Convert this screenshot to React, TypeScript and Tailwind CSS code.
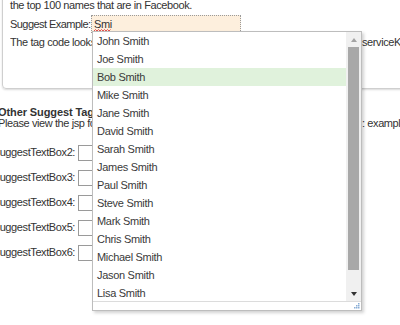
import React from 'react';

const names = [
  'John Smith',
  'Joe Smith',
  'Bob Smith',
  'Mike Smith',
  'Jane Smith',
  'David Smith',
  'Sarah Smith',
  'James Smith',
  'Paul Smith',
  'Steve Smith',
  'Mark Smith',
  'Chris Smith',
  'Michael Smith',
  'Jason Smith',
  'Lisa Smith',
];

const SuggestList = ({ active }: { active: number }) => (
  <div className="absolute left-[92px] top-[31px] flex h-[280px] w-[270px] flex-col border border-[#bdbdbd] bg-white tracking-[-0.3px] shadow-[2px_2px_3px_rgba(0,0,0,0.18)]">
    <div className="flex h-[269px]">
      <div className="flex-1 overflow-hidden">
        {names.map((n, i) => (
          <div
            key={n}
            className={`h-[18px] whitespace-nowrap pl-[4px] leading-[18px] text-[#3a3a3a] ${i === active ? 'bg-[#e0f2dc]' : ''}`}
          >
            {n}
          </div>
        ))}
      </div>
      {/* scrollbar */}
      <div className="flex w-[15px] flex-col bg-[#f0f0f0]">
        <div className="flex h-[15px] items-center justify-center">
          <div className="h-0 w-0 border-x-[3.5px] border-b-[4px] border-x-transparent border-b-[#a3a3a3]" />
        </div>
        <div className="ml-[2px] h-[223px] w-[11px] bg-[#a8a8a8]" />
        <div className="flex-1" />
        <div className="flex h-[15px] items-center justify-center">
          <div className="h-0 w-0 border-x-[3.5px] border-t-[4px] border-x-transparent border-t-[#333]" />
        </div>
      </div>
    </div>
    <div className="relative flex-1 border-t border-[#dcdcdc]">
      <svg className="absolute bottom-[1px] right-[1px]" width="6" height="6" viewBox="0 0 6 6">
        <rect x="4" y="0" width="1.5" height="1.5" fill="#8aaed6" />
        <rect x="2" y="2" width="1.5" height="1.5" fill="#8aaed6" />
        <rect x="4" y="2" width="1.5" height="1.5" fill="#8aaed6" />
        <rect x="0" y="4" width="1.5" height="1.5" fill="#8aaed6" />
        <rect x="2" y="4" width="1.5" height="1.5" fill="#8aaed6" />
        <rect x="4" y="4" width="1.5" height="1.5" fill="#8aaed6" />
      </svg>
    </div>
  </div>
);

export default function App() {
  return (
    <div className="relative h-[325px] w-[400px] overflow-hidden bg-white font-['Liberation_Sans',Arial,sans-serif] text-[11px] tracking-[-0.4px] text-[#333]">
      {/* example box */}
      <div className="-mt-[20px] ml-[2px] w-[420px] rounded-b-[4px] border border-[#cfcfcf] pb-[37px] pl-[7px] pt-[15px] shadow-[0_1px_2px_rgba(0,0,0,0.15)]">
        <div className="whitespace-nowrap leading-[18px]">the top 100 names that are in Facebook.</div>
        <div className="flex h-[19px] items-end whitespace-nowrap">
          <span className="w-[81px] leading-[18px] tracking-[-0.55px]">Suggest Example:</span>
          <div className="relative h-[18px] w-[150px] border border-dotted border-[#9a9a9a] bg-[#fdefdd] pl-[2px] leading-[16px]">
            Smi
            <svg className="absolute bottom-[0px] left-[2px]" width="17" height="3" viewBox="0 0 17 3">
              <path d="M0 2 L1.5 0.5 L3 2 L4.5 0.5 L6 2 L7.5 0.5 L9 2 L10.5 0.5 L12 2 L13.5 0.5 L15 2 L16.5 0.5" fill="none" stroke="#e04040" strokeWidth="0.9" />
            </svg>
          </div>
        </div>
        <div className="whitespace-nowrap leading-[18px]">
          <span className="inline-block w-[352px] overflow-hidden align-top">The tag code looks like this:</span>
          serviceKey=&quot;facebookNames&quot;
        </div>
      </div>

      {/* other examples */}
      <div className="-ml-[2px] mt-[18px]">
        <div className="whitespace-nowrap font-bold leading-[11px] tracking-[-0.1px]">Other Suggest Tag Examples:</div>
        <div className="whitespace-nowrap leading-[11px]">
          <span className="inline-block w-[364px] overflow-hidden align-top">Please view the jsp for the source code of these</span>
          : examples
        </div>
        <div className="mt-[11px]">
          {[2, 3, 4, 5, 6].map((n) => (
            <div key={n} className="flex h-[25px] items-center">
              <div className="flex w-[77px] justify-end">
                <span className="shrink-0 whitespace-nowrap">SuggestTextBox{n}:</span>
              </div>
              <div className="ml-[3px] h-[16px] w-[150px] border border-[#9a9a9a] bg-white" />
            </div>
          ))}
        </div>
      </div>

      <SuggestList active={2} />
    </div>
  );
}
